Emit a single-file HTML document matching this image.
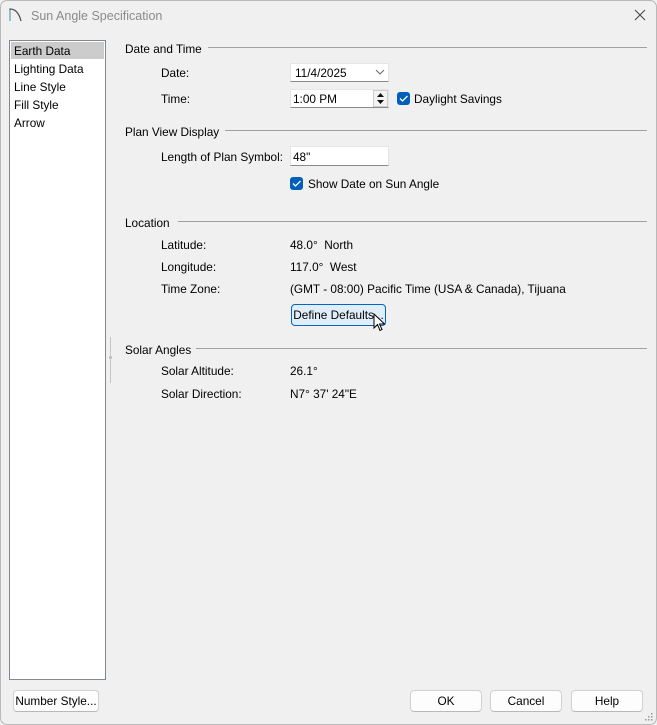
<!DOCTYPE html>
<html><head><style>
*{box-sizing:border-box;margin:0;padding:0}
body{width:657px;height:725px;background:#f0f0f0;font-family:"Liberation Sans",sans-serif;font-size:11.8px;color:#000;position:relative;overflow:hidden}
.a{position:absolute;white-space:nowrap;line-height:14px}
.win{position:absolute;left:0;top:0;width:657px;height:725px;border:1px solid #b9b9b9;border-radius:7px}
.hr{position:absolute;height:1px;background:#a0a0a0}
.f{position:absolute;background:#fff;border:1px solid #e5e5e5;border-bottom:1px solid #8a8a8a}
.cb{position:absolute;width:13px;height:13px;background:#005fb8;border-radius:3px}
.cb svg{position:absolute;left:2px;top:2px}
.btn{position:absolute;background:#fdfdfd;border:1px solid #d0d0d0;border-bottom-color:#b8b8b8;border-radius:4px;text-align:center;line-height:21px}
</style></head><body>
<div class="win"></div>
<svg class="a" style="left:8px;top:7px" width="16" height="16"><path d="M2 14V2Q10 2 13 14" fill="none" stroke="#555" stroke-width="1.3"/><path d="M2 3v11" stroke="#7ab8e0" stroke-width="1.3"/></svg>
<div class="a" style="left:31px;top:9px;color:#8a8a8a;font-size:12.5px">Sun Angle Specification</div>
<svg class="a" style="left:634px;top:9px" width="12" height="12"><path d="M1 1L11 11M11 1L1 11" stroke="#444" stroke-width="1"/></svg>

<div class="a" style="left:9px;top:40px;width:97px;height:640px;background:#fff;border:1px solid #828790"></div>
<div class="a" style="left:11px;top:42px;width:93px;height:17px;background:#cccccc"></div>
<div class="a" style="left:14px;top:44px">Earth Data</div>
<div class="a" style="left:14px;top:62px">Lighting Data</div>
<div class="a" style="left:14px;top:80px">Line Style</div>
<div class="a" style="left:14px;top:98px">Fill Style</div>
<div class="a" style="left:14px;top:116px">Arrow</div>

<div class="a" style="left:125px;top:42px">Date and Time</div><div class="hr" style="left:208px;top:47px;width:439px"></div>
<div class="a" style="left:161px;top:66px">Date:</div>
<div class="f" style="left:290px;top:63px;width:99px;height:19px"></div>
<div class="a" style="left:295px;top:66px">11/4/2025</div>
<svg class="a" style="left:375px;top:69px" width="10" height="6"><path d="M1 1l4 4 4-4" fill="none" stroke="#666"/></svg>
<div class="a" style="left:161px;top:92px">Time:</div>
<div class="f" style="left:290px;top:89px;width:99px;height:19px"></div>
<div class="a" style="left:293px;top:92px">1:00 PM</div>
<div class="a" style="left:373px;top:90px;width:15px;height:17px;background:#f3f3f3;border:1px solid #ccc"></div>
<svg class="a" style="left:376px;top:92px" width="9" height="13"><path d="M1 5l3.5-4 3.5 4z M1 8l3.5 4 3.5-4z" fill="#111"/></svg>
<div class="cb" style="left:397px;top:92px"><svg width="9" height="9"><path d="M1 4.5l2.5 2.5 5-5" fill="none" stroke="#fff" stroke-width="1.3"/></svg></div>
<div class="a" style="left:414px;top:92px">Daylight Savings</div>

<div class="a" style="left:125px;top:125px">Plan View Display</div><div class="hr" style="left:225px;top:130px;width:422px"></div>
<div class="a" style="left:161px;top:150px">Length of Plan Symbol:</div>
<div class="f" style="left:290px;top:146px;width:99px;height:20px"></div>
<div class="a" style="left:293px;top:150px">48"</div>
<div class="cb" style="left:290px;top:177px"><svg width="9" height="9"><path d="M1 4.5l2.5 2.5 5-5" fill="none" stroke="#fff" stroke-width="1.3"/></svg></div>
<div class="a" style="left:308px;top:177px">Show Date on Sun Angle</div>

<div class="a" style="left:125px;top:216px">Location</div><div class="hr" style="left:178px;top:221px;width:469px"></div>
<div class="a" style="left:161px;top:238px">Latitude:</div><div class="a" style="left:290px;top:238px">48.0°&nbsp; North</div>
<div class="a" style="left:161px;top:260px">Longitude:</div><div class="a" style="left:290px;top:260px">117.0°&nbsp; West</div>
<div class="a" style="left:161px;top:282px">Time Zone:</div><div class="a" style="left:290px;top:282px">(GMT - 08:00) Pacific Time (USA &amp; Canada), Tijuana</div>
<div class="btn" style="left:291px;top:304px;width:95px;height:22px;background:#e0eef9;border:1px solid #0067c0;line-height:20px">Define Defaults...</div>
<svg class="a" style="left:373px;top:313px" width="14" height="20"><path d="M1 1v14l3.5-3.5 2.5 6 2-1-2.5-5.5h5z" fill="#fff" stroke="#000" stroke-width="1"/></svg>

<div class="a" style="left:110px;top:337px;width:1px;height:46px;background:#c8c8c8"></div>
<div class="a" style="left:109px;top:356px;width:3px;height:3px;background:#bbb;border-radius:2px"></div>
<div class="a" style="left:125px;top:343px">Solar Angles</div><div class="hr" style="left:196px;top:348px;width:451px"></div>
<div class="a" style="left:161px;top:364px">Solar Altitude:</div><div class="a" style="left:290px;top:364px">26.1°</div>
<div class="a" style="left:161px;top:387px">Solar Direction:</div><div class="a" style="left:290px;top:387px">N7° 37' 24"E</div>

<div class="btn" style="left:13px;top:690px;width:86px;height:22px">Number Style...</div>
<div class="btn" style="left:410px;top:690px;width:72px;height:22px">OK</div>
<div class="btn" style="left:490px;top:690px;width:72px;height:22px">Cancel</div>
<div class="btn" style="left:571px;top:690px;width:72px;height:22px">Help</div>
<svg class="a" style="left:644px;top:712px" width="10" height="10"><g fill="#999"><rect x="7" y="1" width="1.5" height="1.5"/><rect x="4" y="4" width="1.5" height="1.5"/><rect x="7" y="4" width="1.5" height="1.5"/><rect x="1" y="7" width="1.5" height="1.5"/><rect x="4" y="7" width="1.5" height="1.5"/><rect x="7" y="7" width="1.5" height="1.5"/></g></svg>
</body></html>
